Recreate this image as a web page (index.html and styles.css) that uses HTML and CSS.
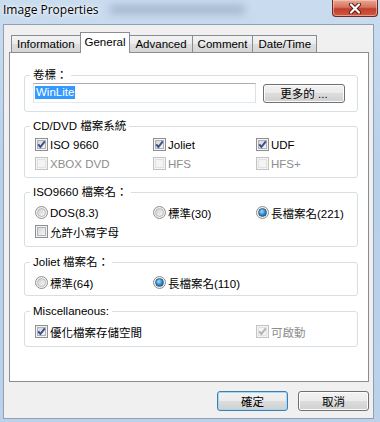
FILE: index.html
```html
<!DOCTYPE html>
<html lang="zh-Hant">
<head>
  <meta charset="UTF-8">
  <title>Image Properties</title>
  <link rel="stylesheet" href="styles.css">
</head>
<body>

<div class="window">
  <div class="titlebar">
    <div class="glass-blur"></div>
    <span class="title">Image Properties</span>
    <div class="close-btn">
      <svg width="14" height="11" viewBox="0 0 14 11">
        <path d="M3 1.5 L11 9.5 M11 1.5 L3 9.5" stroke="#5a1a12" stroke-width="4" stroke-linecap="round"/>
        <path d="M3 1.5 L11 9.5 M11 1.5 L3 9.5" stroke="#fff" stroke-width="2.2" stroke-linecap="round"/>
      </svg>
    </div>
  </div>

  <div class="client">
    <div class="tabs">
      <div class="tab">Information</div>
      <div class="tab active">General</div>
      <div class="tab">Advanced</div>
      <div class="tab">Comment</div>
      <div class="tab">Date/Time</div>
    </div>

    <div class="panel">
      <fieldset class="group group-label">
        <legend>卷標：</legend>
        <div class="label-row">
          <div class="textbox"><span class="selected-text">WinLite</span></div>
          <button class="btn more-btn">更多的 ...</button>
        </div>
      </fieldset>

      <fieldset class="group group-fs">
        <legend>CD/DVD 檔案系統</legend>
        <div class="options">
          <label class="opt"><span class="cb"><svg class="tick" width="13" height="13" viewBox="0 0 13 13"><path d="M3.2 6.3 L5.4 9 L9.8 3.4" stroke="#3d4f8e" stroke-width="2" fill="none"/></svg></span>ISO 9660</label>
          <label class="opt"><span class="cb"><svg class="tick" width="13" height="13" viewBox="0 0 13 13"><path d="M3.2 6.3 L5.4 9 L9.8 3.4" stroke="#3d4f8e" stroke-width="2" fill="none"/></svg></span>Joliet</label>
          <label class="opt"><span class="cb"><svg class="tick" width="13" height="13" viewBox="0 0 13 13"><path d="M3.2 6.3 L5.4 9 L9.8 3.4" stroke="#3d4f8e" stroke-width="2" fill="none"/></svg></span>UDF</label>
          <label class="opt disabled"><span class="cb"></span>XBOX DVD</label>
          <label class="opt disabled"><span class="cb"></span>HFS</label>
          <label class="opt disabled"><span class="cb"></span>HFS+</label>
        </div>
      </fieldset>

      <fieldset class="group group-iso">
        <legend>ISO9660 檔案名：</legend>
        <div class="options">
          <label class="opt"><span class="rb"></span>DOS(8.3)</label>
          <label class="opt"><span class="rb"></span>標準(30)</label>
          <label class="opt"><span class="rb on"></span>長檔案名(221)</label>
          <label class="opt"><span class="cb"></span>允許小寫字母</label>
        </div>
      </fieldset>

      <fieldset class="group group-joliet">
        <legend>Joliet 檔案名：</legend>
        <div class="options">
          <label class="opt"><span class="rb"></span>標準(64)</label>
          <label class="opt"><span class="rb on"></span>長檔案名(110)</label>
        </div>
      </fieldset>

      <fieldset class="group group-misc">
        <legend>Miscellaneous:</legend>
        <div class="options">
          <label class="opt wide"><span class="cb"><svg class="tick" width="13" height="13" viewBox="0 0 13 13"><path d="M3.2 6.3 L5.4 9 L9.8 3.4" stroke="#3d4f8e" stroke-width="2" fill="none"/></svg></span>優化檔案存儲空間</label>
          <label class="opt disabled"><span class="cb"><svg class="tick" width="13" height="13" viewBox="0 0 13 13"><path d="M3.2 6.3 L5.4 9 L9.8 3.4" stroke="#b3b3b3" stroke-width="2" fill="none"/></svg></span>可啟動</label>
        </div>
      </fieldset>
    </div>

    <div class="buttons">
      <button class="btn dialog-btn default">確定</button>
      <button class="btn dialog-btn">取消</button>
    </div>
  </div>
</div>

</body>
</html>
```

FILE: styles.css
```css
body {
  margin: 0;
  font-family: "Liberation Sans", "Noto Sans CJK TC", sans-serif;
  font-size: 11.5px;
  color: #000;
}

.window {
  width: 380px;
  height: 422px;
  overflow: hidden;
  background: linear-gradient(#cadcef, #b9d0e9 40%, #bcd2ea);
}

/* title bar */
.titlebar {
  position: relative;
  height: 24px;
}
.glass-blur {
  position: absolute;
  left: 110px;
  top: 5px;
  width: 135px;
  height: 9px;
  background: #8098b5;
  filter: blur(4px);
  opacity: 0.55;
}
.title {
  position: relative;
  display: block;
  padding-left: 3px;
  line-height: 20px;
  font-family: "Open Sans", sans-serif;
  font-size: 12px;
  text-shadow: 0 0 6px #fff, 0 0 3px #fff;
}
.close-btn {
  position: absolute;
  right: 2px;
  top: 0;
  width: 46px;
  height: 17px;
  box-sizing: border-box;
  border: 1px solid #6b2a22;
  border-top: none;
  border-radius: 0 0 4px 4px;
  background: linear-gradient(#e9a793, #d7735d 45%, #c0402c 55%, #d2593f);
  box-shadow: inset 0 0 0 1px rgba(255, 220, 210, 0.5);
  display: flex;
  align-items: center;
  justify-content: center;
}

/* client area */
.client {
  margin-left: 3px;
  width: 371px;
  height: 395px;
  box-sizing: border-box;
  border: 1px solid #8e9fb6;
  background: #f0f0f0;
  padding-top: 7px;
}

.tabs {
  display: flex;
  align-items: flex-end;
  height: 20px;
  padding-left: 7px;
}
.tab {
  height: 17px;
  box-sizing: border-box;
  border: 1px solid #898c95;
  border-bottom: none;
  margin-right: -1px;
  padding: 0 5px;
  line-height: 16px;
  background: linear-gradient(#f3f3f3, #ebebeb 50%, #dedede 50%, #d6d6d6);
}
.tab.active {
  position: relative;
  z-index: 1;
  height: 21px;
  margin-bottom: -1px;
  padding: 0 4px;
  line-height: 19px;
  background: #fff;
}

.panel {
  margin-left: 5px;
  width: 360px;
  height: 330px;
  box-sizing: border-box;
  border: 1px solid #898c95;
  background: #fff;
  padding-top: 15px;
}

/* group boxes */
.group {
  min-width: 0;
  margin: 8px 10px 0 14px;
  padding: 4px 10px 5px;
  border: 1px solid #d5dfe5;
  border-radius: 3px;
}
.group legend {
  margin-left: -5px;
  padding: 0 3px;
  line-height: 14px;
}
.group-label {
  margin-top: 0;
  padding-top: 1px;
  padding-bottom: 8px;
}
.group-fs {
  margin-top: 7px;
  padding-top: 2px;
  padding-bottom: 4px;
}
.group-iso {
  margin-top: 7px;
}
.group-joliet {
  padding-bottom: 3px;
}

.label-row {
  display: flex;
  align-items: center;
  gap: 7px;
  margin-left: -2px;
}
.textbox {
  width: 223px;
  height: 20px;
  box-sizing: border-box;
  border: 1px solid;
  border-color: #abadb3 #dbdfe6 #e3e9ef #e2e3ea;
  background: #fff;
  padding: 2px 0 0 1px;
}
.selected-text {
  display: inline-block;
  background: #3399ff;
  color: #fff;
  line-height: 13px;
  padding: 0 1px;
}

.options {
  display: grid;
  grid-template-columns: 118px 103px 1fr;
  grid-auto-rows: 19px;
  align-items: center;
}
.opt {
  display: flex;
  align-items: center;
  gap: 2px;
  white-space: nowrap;
}
.opt.wide {
  grid-column: span 2;
}
.opt.disabled {
  color: #8d8d8d;
}

/* checkbox */
.cb {
  position: relative;
  flex: none;
  width: 13px;
  height: 13px;
  box-sizing: border-box;
  border: 1px solid #8e8f8f;
  background: #f4f4f4;
  padding: 1px;
}
.cb::before {
  content: "";
  display: block;
  width: 9px;
  height: 9px;
  box-sizing: border-box;
  border: 1px solid #aeb3b9;
  background: linear-gradient(135deg, #d4d6d9, #f6f6f6);
}
.cb .tick {
  position: absolute;
  left: -1px;
  top: -1px;
}
.disabled .cb {
  border-color: #c3c3c3;
}
.disabled .cb::before {
  border-color: #e1e1e1;
  background: #f4f4f4;
}

/* radio */
.rb {
  position: relative;
  flex: none;
  width: 13px;
  height: 13px;
  box-sizing: border-box;
  border: 1px solid #8e8f8f;
  border-radius: 50%;
  background: #f2f2f2;
}
.rb::before {
  content: "";
  position: absolute;
  left: 1px;
  top: 1px;
  width: 9px;
  height: 9px;
  box-sizing: border-box;
  border-radius: 50%;
  border: 1px solid #b8b8b8;
  background: linear-gradient(135deg, #cfcfcf, #f8f8f8);
}
.rb.on::before {
  border-color: #2c628b;
  background: radial-gradient(circle at 40% 35%, #a9dcf7, #2d86c6 55%, #0f4a7f);
}

/* buttons */
.btn {
  font: inherit;
  color: #000;
  height: 20px;
  box-sizing: border-box;
  padding: 0;
  border: 1px solid #707070;
  border-radius: 3px;
  background: linear-gradient(#f2f2f2, #ebebeb 50%, #dddddd 50%, #cfcfcf);
  box-shadow: inset 0 0 0 1px #fcfcfc;
}
.more-btn {
  width: 82px;
  height: 19px;
}
.dialog-btn {
  width: 71px;
}
.btn.default {
  border-color: #3c7fb1;
  box-shadow: inset 0 0 0 1px #a7d8f2;
}

.buttons {
  display: flex;
  justify-content: flex-end;
  gap: 10px;
  margin-top: 9px;
  padding-right: 4px;
}
```
